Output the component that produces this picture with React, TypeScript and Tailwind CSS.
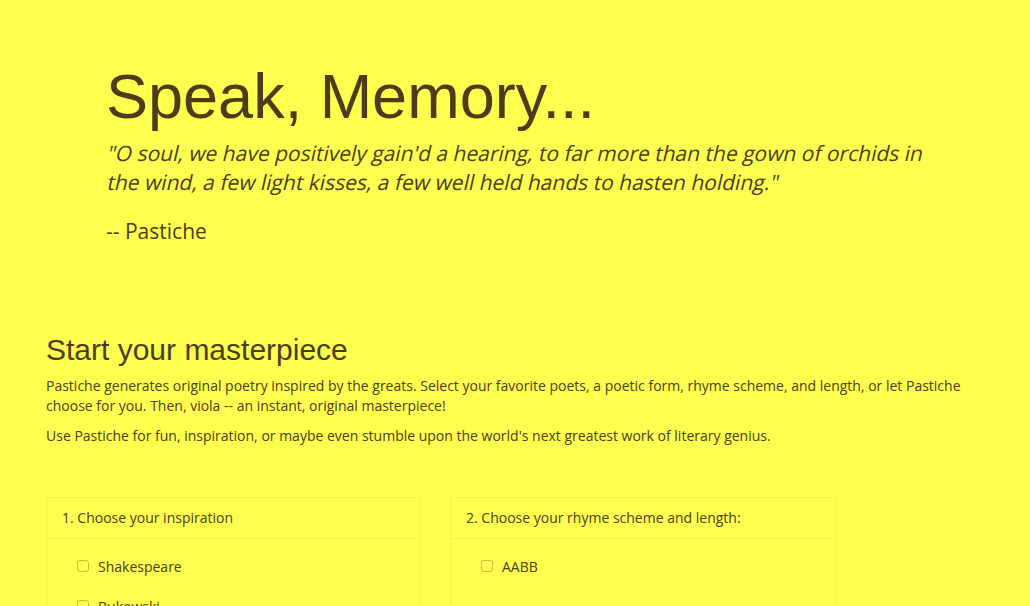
const POETS = ['Shakespeare', 'Bukowski', 'Dickinson', 'Whitman'];

function Check({ label }: { label: string }) {
  return (
    <label className="flex items-center h-[20px] mb-[20px] pl-[15px]">
      <span className="block w-[12px] h-[12px] rounded-[3px] border border-[#d8b63e] bg-[#ffff4f] -mt-[2px]" />
      <span className="ml-[9px]">{label}</span>
    </label>
  );
}

function Panel({ title, className, children }: { title: string; className: string; children: React.ReactNode }) {
  return (
    <div className={`border border-[#f7f34c] ${className}`}>
      <div className="px-[15px] py-[10px] leading-[20px] border-b border-[#f7f34c]">{title}</div>
      <div className="px-[15px] pt-[18px] pb-[15px]">{children}</div>
    </div>
  );
}

export default function App() {
  return (
    <div
      className="min-h-screen bg-[#ffff4f] text-[#4d3c1a] text-[14px] leading-[20px]"
      style={{ fontFamily: '"Open Sans", "Liberation Sans", sans-serif' }}
    >
      <div className="w-[970px] mx-auto px-[15px]">
        {/* jumbotron */}
        <div className="pl-[61px] pr-[60px] pt-[62px]">
          <h1 className="text-[63px] leading-[69px] font-normal" style={{ fontFamily: '"Liberation Sans", Arial, sans-serif' }}>
            Speak, Memory...
          </h1>
          {/* quote: slanted regular face, line by line */}
          <p className="mt-[8px] text-[21px] leading-[29px]">
            <span className="block w-max origin-[0_23px] -skew-x-[13deg]">
              "O soul, we have positively gain'd a hearing, to far more than the gown of orchids in
            </span>
            <span className="block w-max origin-[0_23px] -skew-x-[13deg]">
              the wind, a few light kisses, a few well held hands to hasten holding."
            </span>
          </p>
          <p className="mt-[20px] text-[21px] leading-[29px]">-- Pastiche</p>
        </div>

        {/* intro */}
        <h2 className="mt-[87px] text-[30px] leading-[33px] font-normal ml-[1px]" style={{ fontFamily: '"Liberation Sans", Arial, sans-serif' }}>
          Start your masterpiece
        </h2>
        <div className="pl-[1px]">
          <p className="mt-[10px]">
            Pastiche generates original poetry inspired by the greats. Select your favorite poets, a poetic form, rhyme
            scheme, and length, or let Pastiche choose for you. Then, viola -- an instant, original masterpiece!
          </p>
          <p className="mt-[10px]">
            Use Pastiche for fun, inspiration, or maybe even stumble upon the world's next greatest work of literary genius.
          </p>
        </div>

        {/* choices */}
        <div className="flex items-start mt-[51px] pl-[1px]">
          <Panel title="1. Choose your inspiration" className="w-[375px]">
            {POETS.map((p) => (
              <Check key={p} label={p} />
            ))}
          </Panel>
          <Panel title="2. Choose your rhyme scheme and length:" className="w-[387px] ml-[29px]">
            <Check label="AABB" />
            <div className="mt-[30px] pl-[15px]">Length</div>
          </Panel>
        </div>
      </div>
    </div>
  );
}
